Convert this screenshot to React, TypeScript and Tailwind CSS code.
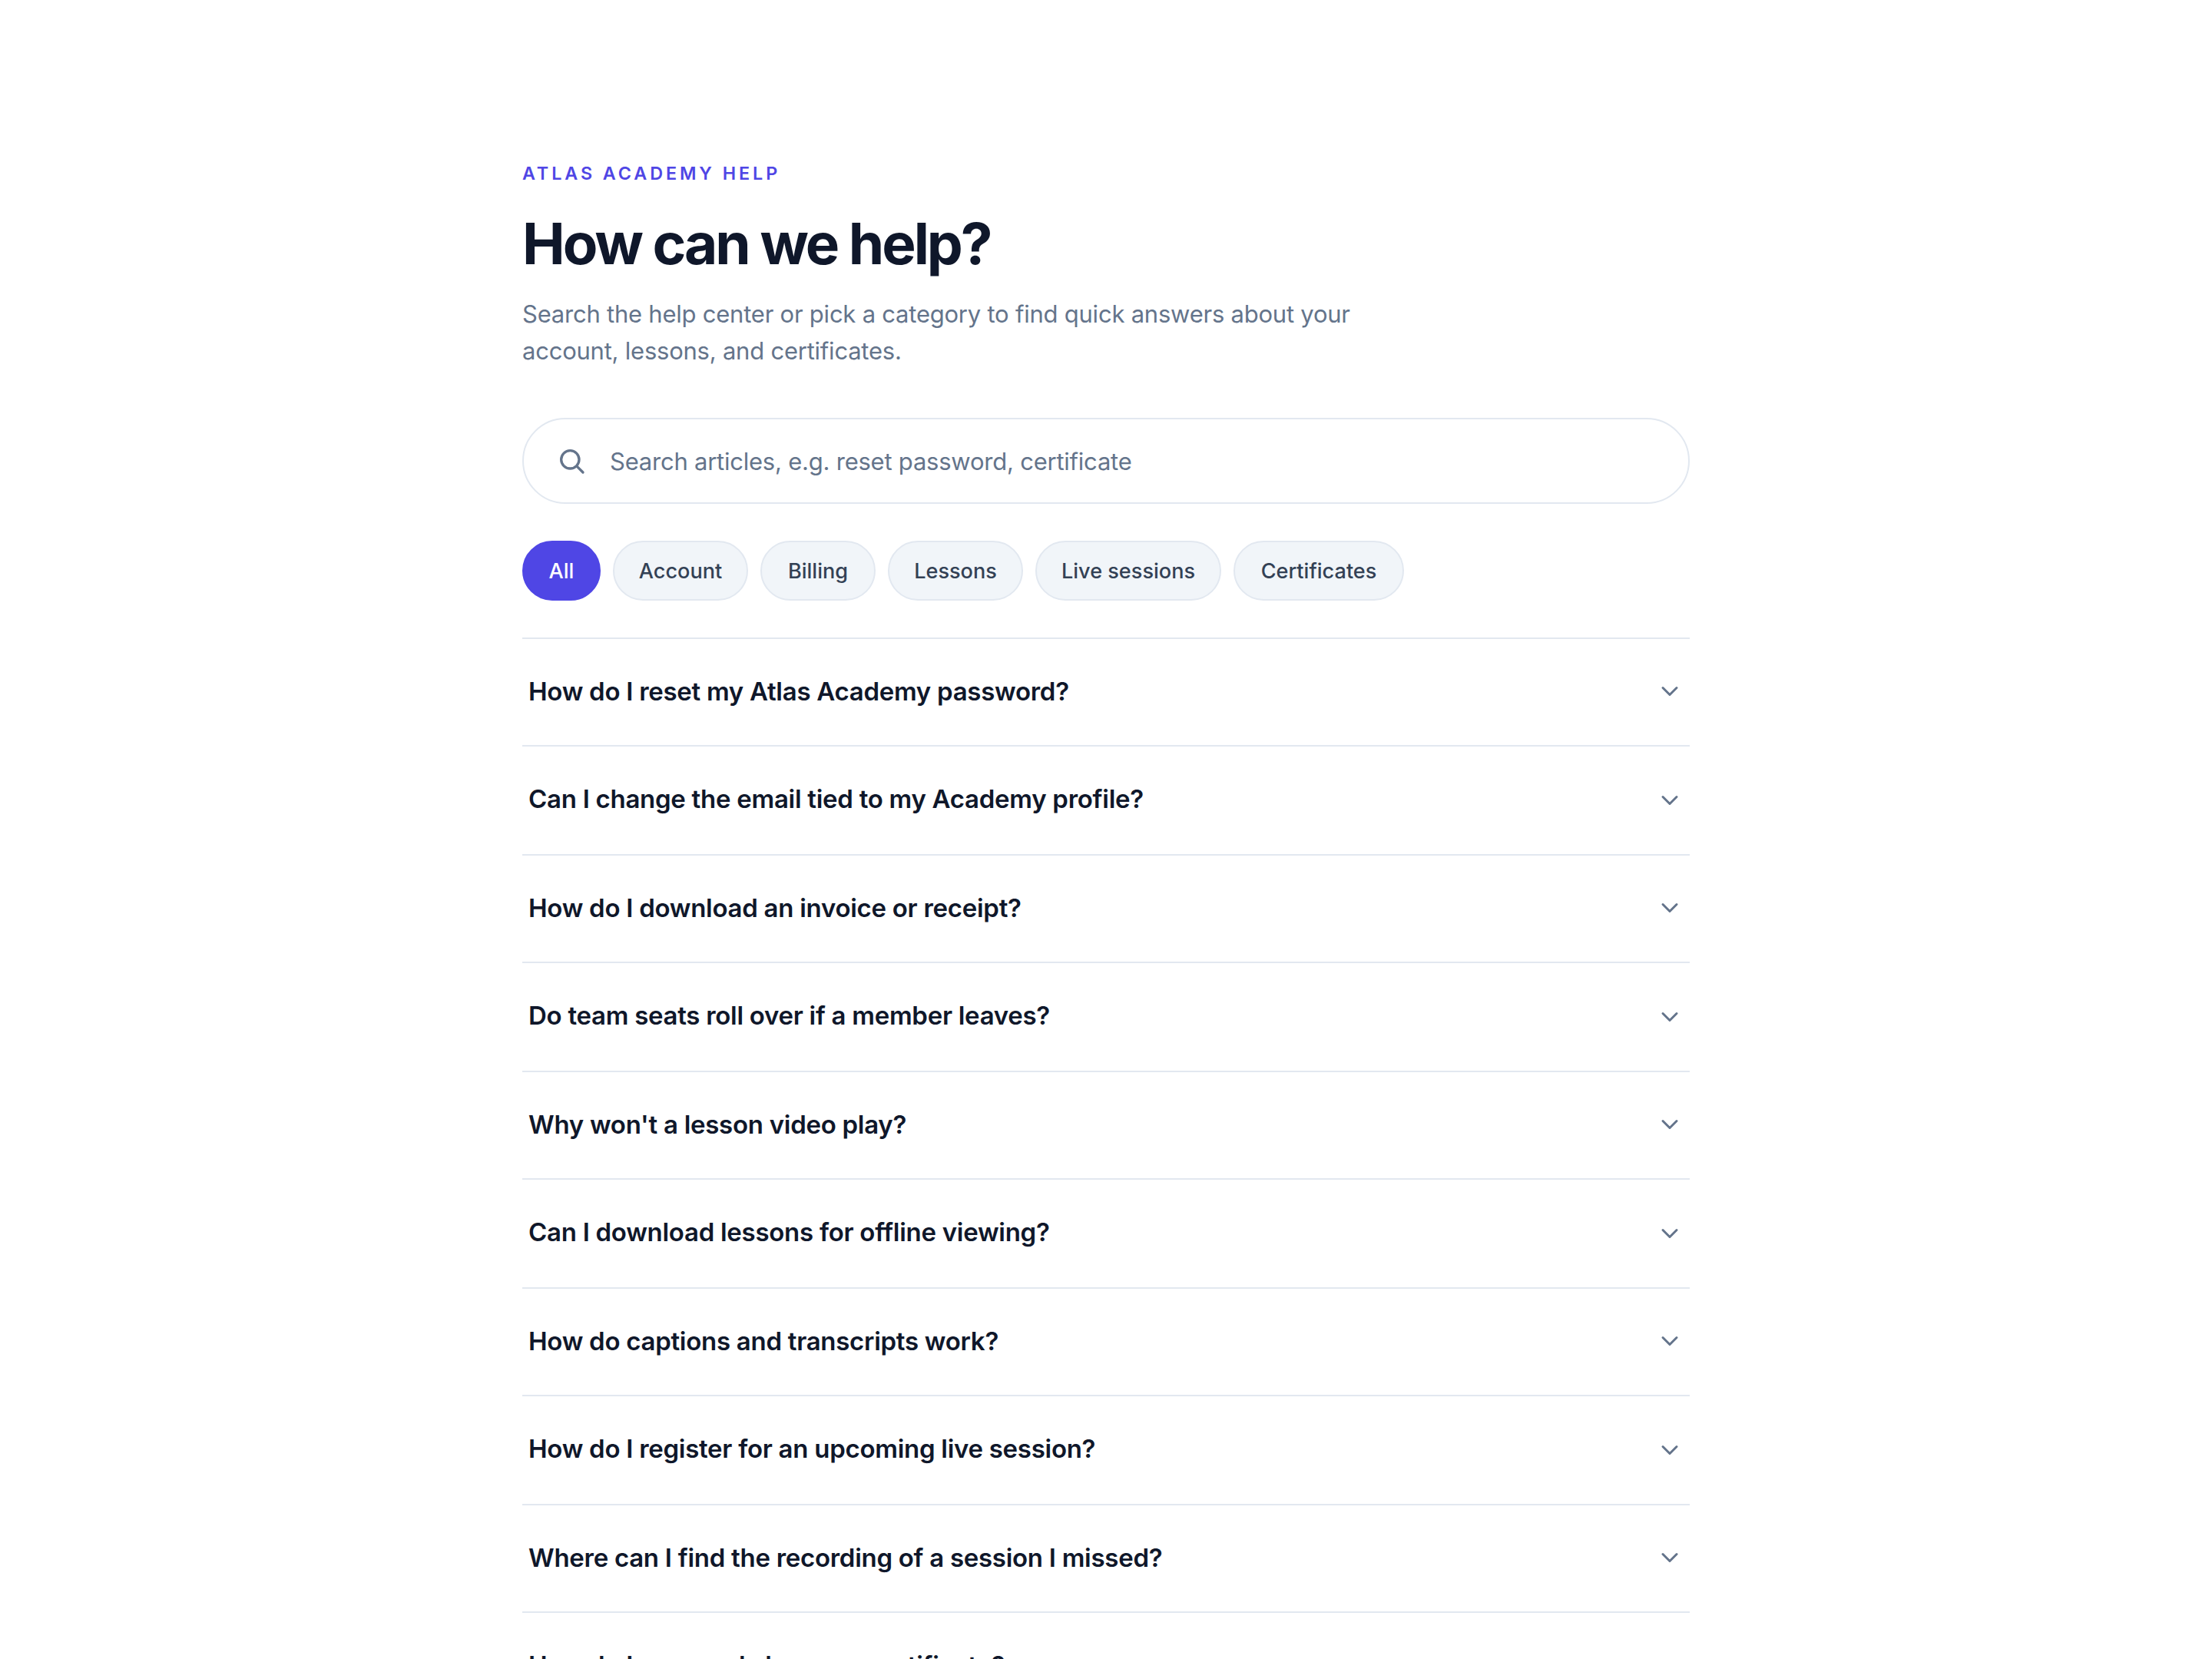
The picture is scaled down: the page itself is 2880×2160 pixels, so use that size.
import { useState } from 'react';

const categories = [
  { name: 'All', width: 'w-[102px]' },
  { name: 'Account', width: 'w-[176px]' },
  { name: 'Billing', width: 'w-[150px]' },
  { name: 'Lessons', width: 'w-[176px]' },
  { name: 'Live sessions', width: 'w-[242px]' },
  { name: 'Certificates', width: 'w-[222px]' },
];

const questions = [
  'How do I reset my Atlas Academy password?',
  'Can I change the email tied to my Academy profile?',
  'How do I download an invoice or receipt?',
  'Do team seats roll over if a member leaves?',
  "Why won't a lesson video play?",
  'Can I download lessons for offline viewing?',
  'How do captions and transcripts work?',
  'How do I register for an upcoming live session?',
  'Where can I find the recording of a session I missed?',
  'How do I earn and share my certificate?',
];

export default function App() {
  const [active, setActive] = useState('All');

  return (
    <main className="h-[2160px] overflow-hidden bg-white font-['Inter',sans-serif] text-[#0f172a]">
      <div className="mx-auto w-[1520px] pt-[208px]">
        <p className="h-9 text-[23.3px] leading-9 font-semibold tracking-[3.93px] text-[#4f46e5] uppercase">Atlas Academy Help</p>
        <h1 className="mt-[27px] h-[92px] text-[74.6px] leading-[92px] font-bold tracking-[-3.02px]">How can we help?</h1>
        <p className="mt-[22px] w-[1120px] text-[31px] leading-12 tracking-[-0.23px] text-[#64748b]">
          Search the help center or pick a category to find quick answers about your
          <br />
          account, lessons, and certificates.
        </p>

        <label className="mt-[63px] flex h-28 items-center rounded-full border-2 border-[#e2e8f0] pr-10 pl-[42px]">
          <svg className="size-10 shrink-0" viewBox="0 0 24 24" fill="none" stroke="#64748b" strokeWidth="2" strokeLinecap="round">
            <circle cx="11" cy="11" r="7" />
            <path d="m21 21-4.3-4.3" />
          </svg>
          <input
            className="ml-[30px] flex-1 pt-0.5 text-[31px] tracking-[-0.23px] outline-none placeholder:text-[#64748b]"
            placeholder="Search articles, e.g. reset password, certificate"
          />
        </label>

        <div className="mt-12 flex gap-4">
          {categories.map(({ name, width }) => (
            <button
              key={name}
              onClick={() => setActive(name)}
              className={`h-[78px] rounded-full border-2 pt-0.5 text-[27.1px] font-medium ${width} ${
                active === name ? 'border-[#4f46e5] bg-[#4f46e5] text-white' : 'border-[#e2e8f0] bg-[#f1f5f9] text-[#334155]'
              }`}
            >
              {name}
            </button>
          ))}
        </div>

        <ul className="mt-12 border-t-2 border-[#e2e8f0]">
          {questions.map((question) => (
            <li key={question} className="group flex h-[142px] justify-between border-b-2 border-[#e2e8f0] px-2 odd:h-[140px]">
              <span className="pt-[42px] text-[33px] leading-[52px] font-semibold tracking-[-0.28px]">{question}</span>
              <svg
                className="mt-[52px] size-9 group-odd:mt-[50px]"
                viewBox="0 0 24 24"
                fill="none"
                stroke="#64748b"
                strokeWidth="2"
                strokeLinecap="round"
                strokeLinejoin="round"
              >
                <path d="m6 9 6 6 6-6" />
              </svg>
            </li>
          ))}
        </ul>
      </div>
    </main>
  );
}
